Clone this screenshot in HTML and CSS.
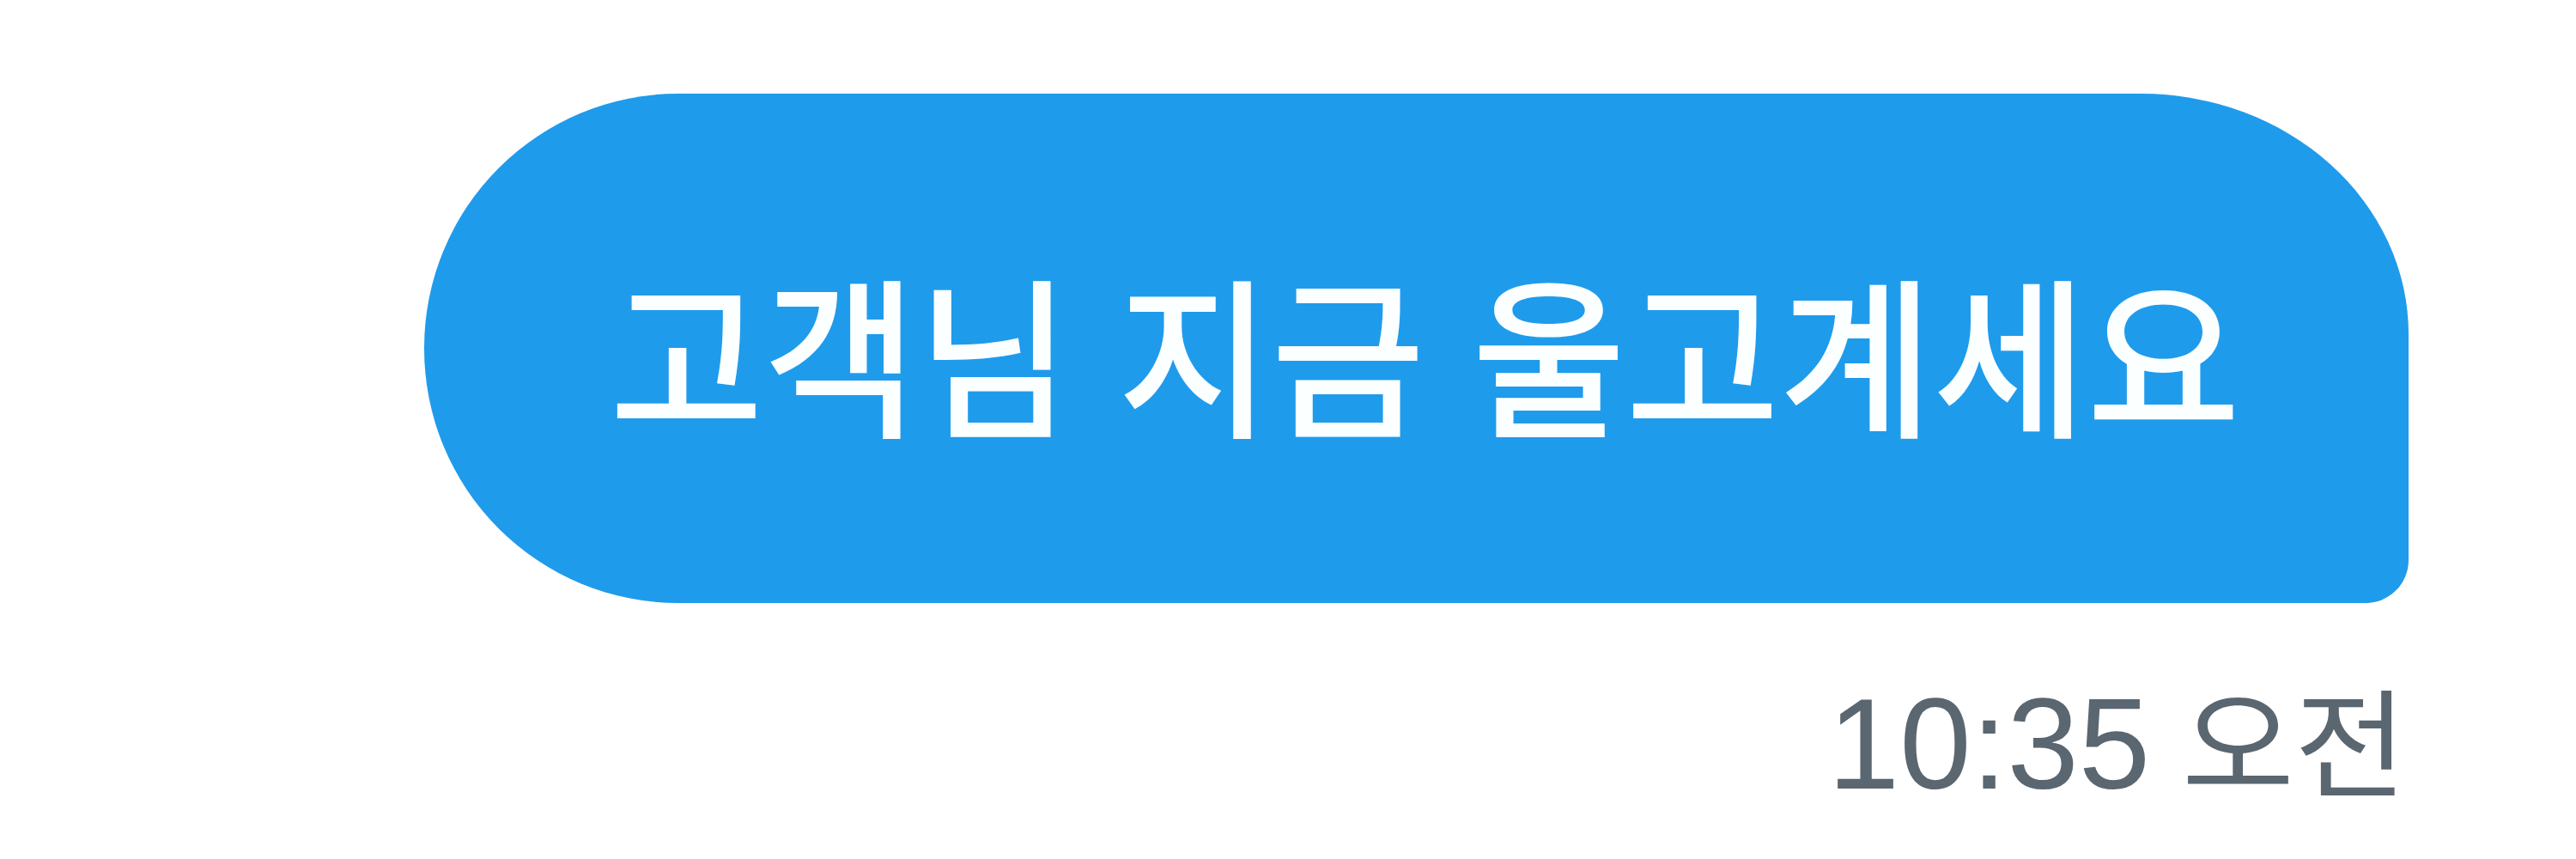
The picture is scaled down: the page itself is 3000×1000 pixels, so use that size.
FILE: index.html
```html
<!DOCTYPE html>
<html lang="ko">
<head>
<meta charset="utf-8">
<link rel="stylesheet" href="styles.css">
</head>
<body>
<div class="thread">
  <div class="message">
    <div class="bubble"><span class="bubble-text" id="bt">고객님 지금 울고계세요</span></div>
    <div class="meta" id="mt">10:35 <span class="meta-ampm">오전</span></div>
  </div>
</div>
<script src="app.js"></script>
</body>
</html>
```
FILE: styles.css
```css
html, body {
  margin: 0;
  padding: 0;
  background: #ffffff;
}
.thread {
  width: 3000px;
  height: 1000px;
  box-sizing: border-box;
  padding: 109px 195px 0 0;
  display: flex;
  flex-direction: column;
  align-items: flex-end;
}
.message {
  display: flex;
  flex-direction: column;
  align-items: flex-end;
}
.bubble {
  width: 2311px;
  height: 593px;
  box-sizing: border-box;
  background: #1f9bec;
  border-radius: 296px 312px 50px 296px / 296px 280px 50px 296px;
  display: flex;
  align-items: center;
  padding: 3px 0 0 216px;
}
.bubble-text {
  display: inline-block;
  color: #fbffff;
  font-family: "Noto Sans CJK KR", "Liberation Sans", sans-serif;
  font-size: 200px;
  font-weight: 500;
  line-height: 1;
  white-space: nowrap;
  transform: scaleX(0.973);
  transform-origin: left center;
}
.meta {
  margin-top: 88px;
  margin-right: 12px;
  color: #5a6670;
  font-family: "Liberation Sans", Arial, "Noto Sans CJK KR", sans-serif;
  font-size: 150px;
  line-height: 1;
  white-space: nowrap;
}
.meta-ampm {
  display: inline-block;
  margin-left: -5px;
  font-family: "Noto Sans CJK KR", "Liberation Sans", sans-serif;
  font-size: 137px;
  transform: scaleX(1.039);
  transform-origin: left center;
}
```
FILE: app.js
```js
(function () {
  var bubbleText = '고객님 지금 울고계세요';
  var time = '10:35';
  var ampm = '오전';

  function fill() {
    var bt = document.getElementById('bt');
    var mt = document.getElementById('mt');
    bt.textContent = bubbleText;
    mt.textContent = '';
    mt.appendChild(document.createTextNode(time + ' '));
    var s = document.createElement('span');
    s.className = 'meta-ampm';
    s.textContent = ampm;
    mt.appendChild(s);
    document.body.getBoundingClientRect();
  }

  var ctx = document.createElement('canvas').getContext('2d');
  ['500 200px "Noto Sans CJK KR"', '137px "Noto Sans CJK KR"', '150px "Liberation Sans"'].forEach(function (f) {
    ctx.font = f;
    ctx.measureText(bubbleText + ' ' + time + ' ' + ampm);
  });

  fill();
  if (document.fonts && document.fonts.ready) {
    document.fonts.ready.then(fill);
  }
  setTimeout(fill, 0);
})();
```
